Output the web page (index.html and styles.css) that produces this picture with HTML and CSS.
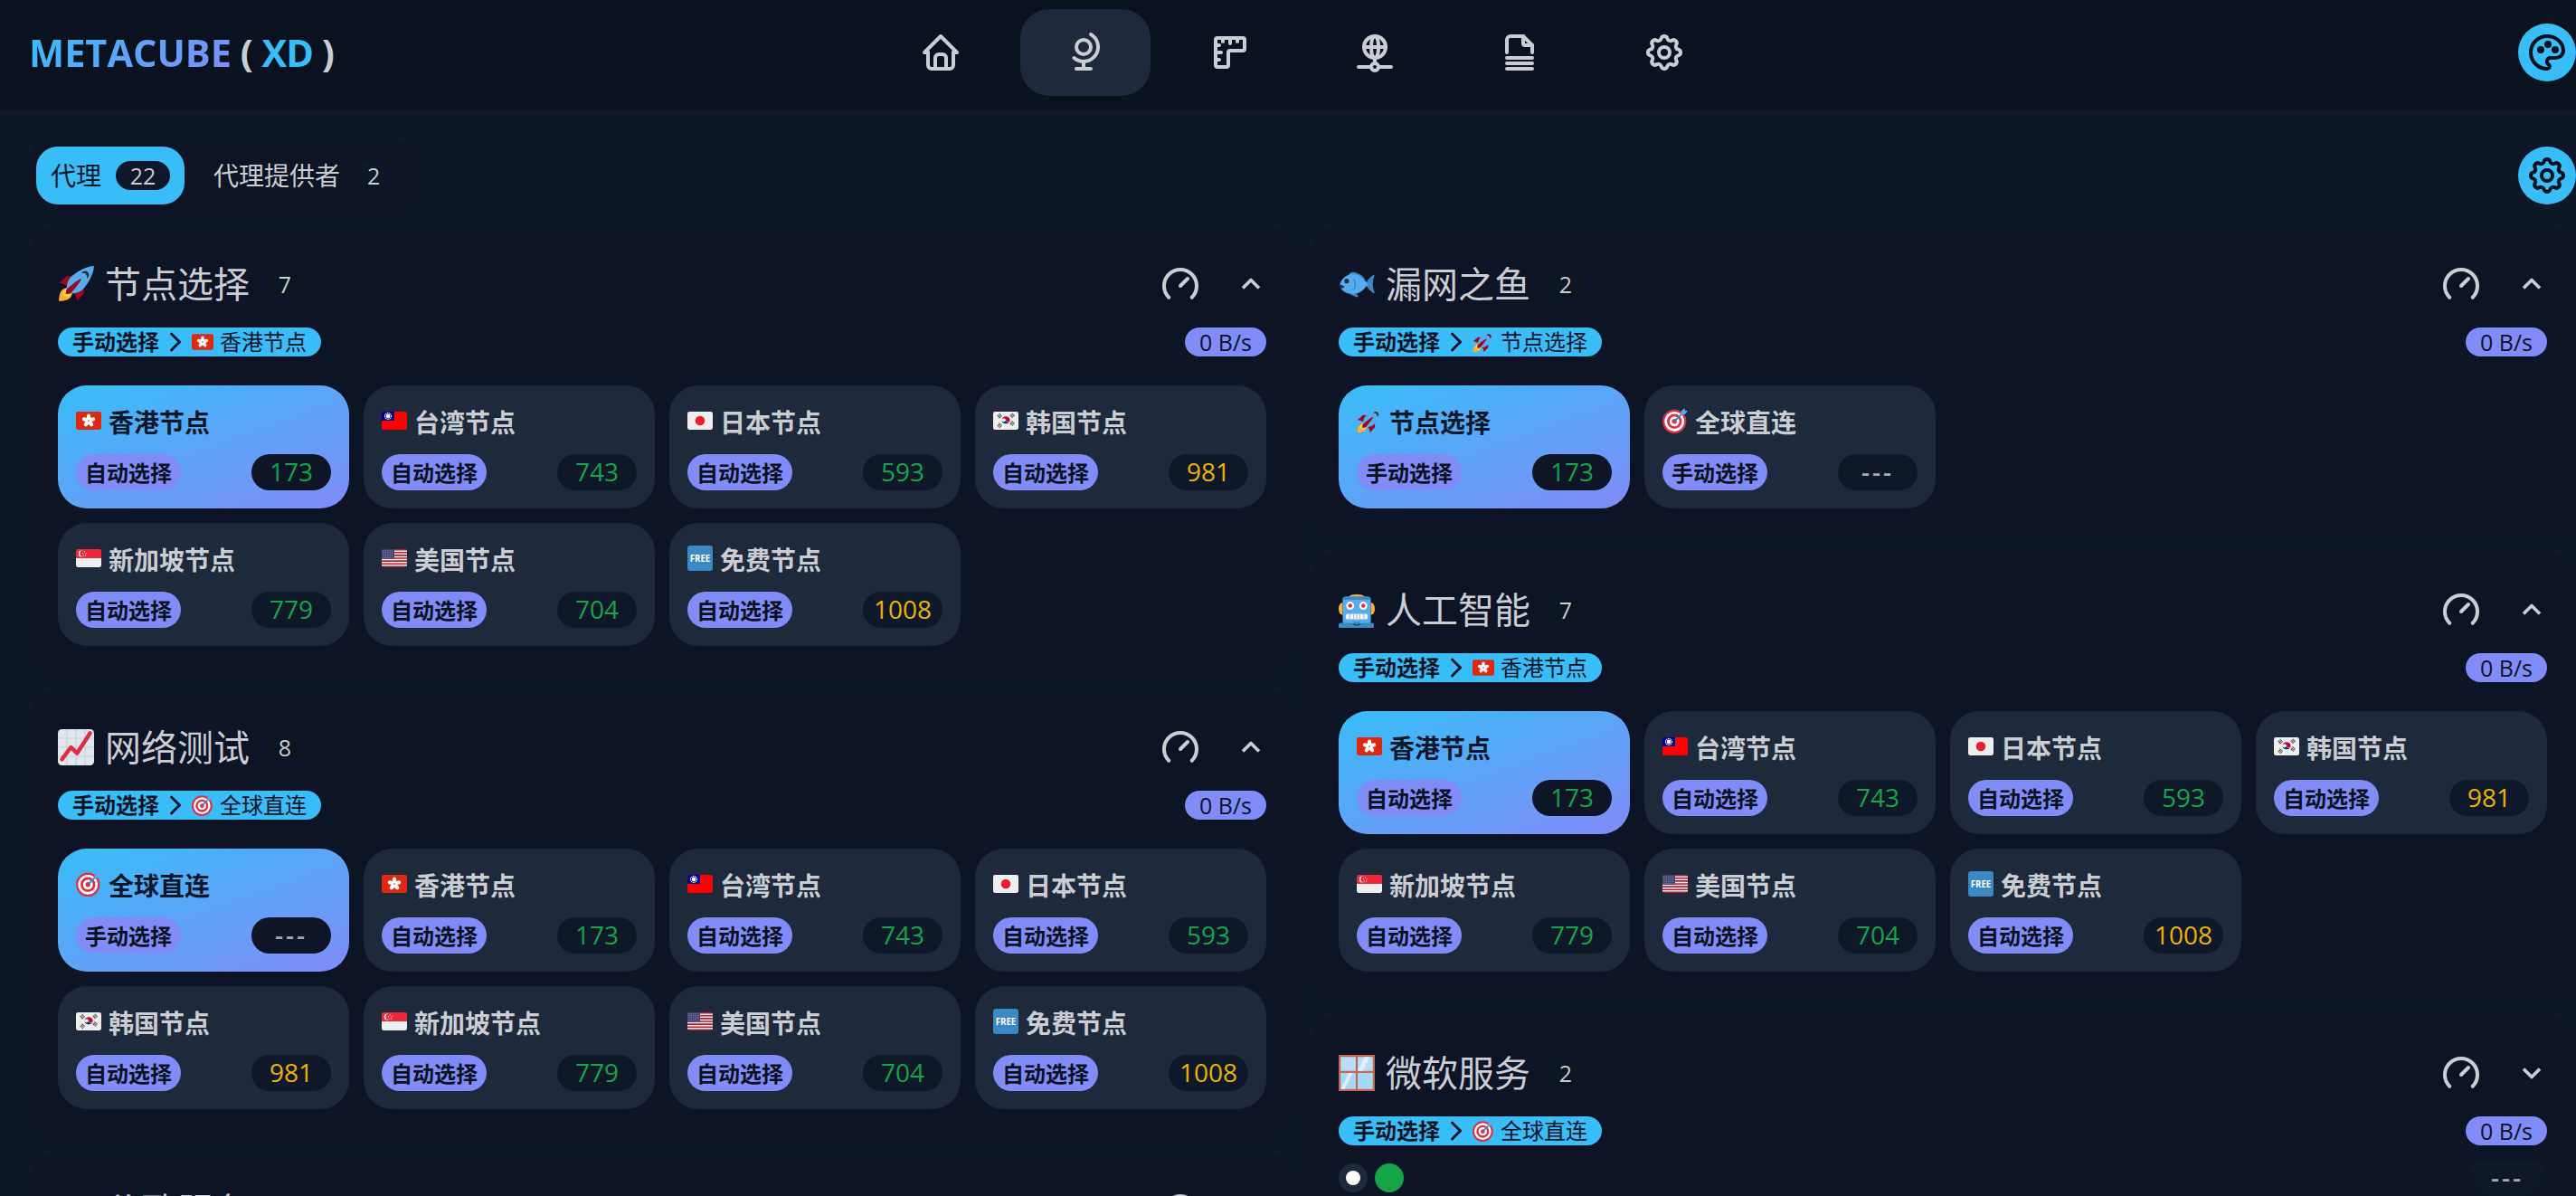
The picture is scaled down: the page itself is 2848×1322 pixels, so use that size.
FILE: index.html
```html
<!DOCTYPE html>
<html lang="zh">
<head>
<meta charset="utf-8">
<title>MetaCubeXD</title>
<link rel="stylesheet" href="styles.css">
</head>
<body>
<svg class="sprites" aria-hidden="true">
  <symbol id="i-home" viewBox="0 0 24 24"><path d="M5 12l-2 0l9 -9l9 9l-2 0"/><path d="M5 12v7a2 2 0 0 0 2 2h10a2 2 0 0 0 2 -2v-7"/><path d="M9 21v-6a2 2 0 0 1 2 -2h2a2 2 0 0 1 2 2v6"/></symbol>
  <symbol id="i-globe" viewBox="0 0 24 24"><path d="M7 9a4 4 0 1 0 8 0a4 4 0 0 0 -8 0"/><path d="M5.75 15a8.015 8.015 0 1 0 9.25 -13"/><path d="M11 17v4"/><path d="M7 21h8"/></symbol>
  <symbol id="i-ruler" viewBox="0 0 24 24"><path d="M5 4h14a1 1 0 0 1 1 1v5a1 1 0 0 1 -1 1h-7a1 1 0 0 0 -1 1v7a1 1 0 0 1 -1 1h-5a1 1 0 0 1 -1 -1v-14a1 1 0 0 1 1 -1"/><path d="M4 8l2 0"/><path d="M4 12l3 0"/><path d="M4 16l2 0"/><path d="M8 4l0 2"/><path d="M12 4l0 3"/><path d="M16 4l0 2"/></symbol>
  <symbol id="i-net" viewBox="0 0 24 24"><path d="M6 9a6 6 0 1 0 12 0a6 6 0 0 0 -12 0"/><path d="M12 3c1.333 .333 2 2.333 2 6s-.667 5.667 -2 6"/><path d="M12 3c-1.333 .333 -2 2.333 -2 6s.667 5.667 2 6"/><path d="M6 9h12"/><path d="M3 20h7"/><path d="M14 20h7"/><path d="M10 20a2 2 0 1 0 4 0a2 2 0 0 0 -4 0"/><path d="M12 15v3"/></symbol>
  <symbol id="i-file" viewBox="0 0 24 24"><path d="M14 3v4a1 1 0 0 0 1 1h4"/><path d="M5 12v-7a2 2 0 0 1 2 -2h7l5 5v4"/><path d="M5 21h14"/><path d="M5 18h14"/><path d="M5 15h14"/></symbol>
  <symbol id="i-gear" viewBox="0 0 24 24"><path d="M10.325 4.317c.426 -1.756 2.924 -1.756 3.35 0a1.724 1.724 0 0 0 2.573 1.066c1.543 -.94 3.31 .826 2.37 2.37a1.724 1.724 0 0 0 1.065 2.572c1.756 .426 1.756 2.924 0 3.35a1.724 1.724 0 0 0 -1.066 2.573c.94 1.543 -.826 3.31 -2.37 2.37a1.724 1.724 0 0 0 -2.572 1.065c-.426 1.756 -2.924 1.756 -3.35 0a1.724 1.724 0 0 0 -2.573 -1.066c-1.543 .94 -3.31 -.826 -2.37 -2.37a1.724 1.724 0 0 0 -1.065 -2.572c-1.756 -.426 -1.756 -2.924 0 -3.35a1.724 1.724 0 0 0 1.066 -2.573c-.94 -1.543 .826 -3.31 2.37 -2.37c1 .608 2.296 .07 2.572 -1.065z"/><path d="M9 12a3 3 0 1 0 6 0a3 3 0 0 0 -6 0"/></symbol>
  <symbol id="i-palette" viewBox="0 0 24 24"><path d="M12 21a9 9 0 0 1 0 -18c4.97 0 9 3.582 9 8c0 1.06 -.474 2.078 -1.318 2.828c-.844 .75 -1.989 1.172 -3.182 1.172h-2.5a2 2 0 0 0 -1 3.75a1.3 1.3 0 0 1 -1 2.25"/><path d="M7.5 10.5a1 1 0 1 0 2 0a1 1 0 1 0 -2 0"/><path d="M11.5 7.5a1 1 0 1 0 2 0a1 1 0 1 0 -2 0"/><path d="M15.5 10.5a1 1 0 1 0 2 0a1 1 0 1 0 -2 0"/></symbol>
  <symbol id="i-gauge" viewBox="0 0 24 24"><path d="M5.636 19.364a9 9 0 1 1 12.728 0"/><path d="M16 9l-4 4"/></symbol>
  <symbol id="i-up" viewBox="0 0 24 24"><path d="M6 15l6 -6l6 6"/></symbol>
  <symbol id="i-down" viewBox="0 0 24 24"><path d="M6 9l6 6l6 -6"/></symbol>
  <symbol id="i-right" viewBox="0 0 24 24"><path d="M9 6l6 6l-6 6"/></symbol>

  <symbol id="e-rocket" viewBox="0 0 36 36"><path fill="#A0041E" d="M1 17l8-7 16 1 1 16-7 8s.001-5.999-6-12-12-6-12-6z"/><path fill="#FFAC33" d="M.973 35s-.036-7.979 2.985-11S15 21.187 15 21.187 14.999 29 11.999 32c-3 3-11.026 3-11.026 3z"/><circle fill="#FFCC4D" cx="9" cy="27" r="4"/><path fill="#55ACEE" d="M36 0s-10 0-22 10c-6 5-6 14-4 16s11 2 16-4c10-12 10-22 10-22z"/><path fill="#292F33" d="M27 5c-1.623 0-3.013.97-3.641 2.36.502-.227 1.055-.36 1.641-.36 2.209 0 4 1.791 4 4 0 .586-.133 1.139-.359 1.64C30.03 12.013 31 10.623 31 9c0-2.209-1.791-4-4-4z"/><path fill="#A0041E" d="M8 28s0-4 1-5 13-11 14-10-9 13-10 14-5 1-5 1z"/></symbol>
  <symbol id="e-target" viewBox="0 0 36 36"><circle fill="#DD2E44" cx="17" cy="19" r="17"/><circle fill="#FFF" cx="17" cy="19" r="14"/><circle fill="#DD2E44" cx="17" cy="19" r="10.500"/><circle fill="#FFF" cx="17" cy="19" r="7"/><circle fill="#DD2E44" cx="17" cy="19" r="3.500"/><path fill="none" stroke="#3B88C3" stroke-width="2.400" d="M17 19L30 6"/><path fill="#55ACEE" d="M26 10l1-6 5-4v4h4l-4 5-6 1z"/></symbol>
  <symbol id="e-chart" viewBox="0 0 36 36"><rect x="0" y="0" width="36" height="36" rx="4" fill="#E1E8ED"/><path stroke="#CCD6DD" stroke-width="1.5" fill="none" d="M9 0v36M18 0v36M27 0v36M0 9h36M0 18h36M0 27h36"/><path stroke="#DD2E44" stroke-width="4" stroke-linecap="round" stroke-linejoin="round" fill="none" d="M4 30l9-12 6 6 13-20"/></symbol>
  <symbol id="e-fish" viewBox="0 0 36 36"><path fill="#3B88C3" d="M34.5 9c-3 2-6 5-8 9 2 4 5 7 8 9 1 .4 1.5-.5 1-1.500-1-2-1.500-5-1.500-7.500s.5-5.500 1.500-7.500c.5-1 0-1.900-1-1.500z"/><path fill="#3B88C3" d="M10 9c1-2 2-3 4-3 5 0 11 4 13 8L10 9zM11 28c2 1 4 2.500 8 3 1 0 0-2-1-3l-7 0z"/><path fill="#55ACEE" d="M1 19c1-6 7-11 13-11 7 0 12 6 15 10-3 5-8 10-15 10-6 0-12-3-13-9z"/><circle fill="#292F33" cx="8" cy="15" r="2.300"/><path fill="#292F33" d="M.7 18.500c2 .2 4 1 5.300 2.500-1.500 1-3 1.500-4 1.500-.8-1-1.200-2.500-1.300-4z"/><path fill="none" stroke="#3B88C3" stroke-width="1.200" d="M15 13c2 3 2 7 0 11"/></symbol>
  <symbol id="e-robot" viewBox="0 0 36 36"><path fill="#FFAC33" d="M10 5c2-3 14-3 16 0v4H10zM4 11H3c-2 1-3 3-3 6s1 5 3 6h1zM32 11h1c2 1 3 3 3 6s-1 5-3 6h-1z"/><rect x="4" y="5" width="28" height="27" rx="3" fill="#55ACEE"/><path fill="#3B88C3" d="M7 5h22c1.500 0 3 1.500 3 3H4c0-1.500 1.500-3 3-3z"/><circle fill="#FFF" cx="11.500" cy="14" r="4"/><circle fill="#FFF" cx="24.500" cy="14" r="4"/><circle fill="#DD2E44" cx="11.500" cy="14" r="2"/><circle fill="#DD2E44" cx="24.500" cy="14" r="2"/><rect x="7" y="22" width="22" height="5.500" rx="2" fill="#F5F8FA"/><path stroke="#99AAB5" stroke-width=".8" d="M11 22v5.500M15 22v5.500M18 22v5.500M21 22v5.500M25 22v5.500"/><path fill="#3B88C3" d="M2 31h9l7 3 7-3h9c1 0 1 1 1 2v2c0 .6-.4 1-1 1H1c-.6 0-1-.4-1-1v-2c0-1 1-2 2-2z"/><path fill="#3B88C3" d="M14 30h8l-4 3.500z"/></symbol>
  <symbol id="e-window" viewBox="0 0 36 36"><rect width="36" height="36" fill="#C1694F"/><rect x="2" y="2" width="15" height="14" fill="#BBDDF5"/><rect x="19" y="2" width="15" height="14" fill="#BBDDF5"/><rect x="2" y="18" width="15" height="16" fill="#A6D8FA"/><rect x="19" y="18" width="15" height="16" fill="#A6D8FA"/><path fill="#DCEFFB" d="M26 2h5l-7 14h-5v-1zM10 18h4l-8 16H2z"/></symbol>

  <symbol id="f-hk" viewBox="0 0 36 36"><rect y="5" width="36" height="26" rx="3" fill="#DE2910"/><g fill="#FFF"><ellipse cx="18" cy="13" rx="2.800" ry="4.600"/><ellipse cx="18" cy="13" rx="2.800" ry="4.600" transform="rotate(72 18 18)"/><ellipse cx="18" cy="13" rx="2.800" ry="4.600" transform="rotate(144 18 18)"/><ellipse cx="18" cy="13" rx="2.800" ry="4.600" transform="rotate(216 18 18)"/><ellipse cx="18" cy="13" rx="2.800" ry="4.600" transform="rotate(288 18 18)"/></g><circle cx="18" cy="18" r="1" fill="#DE2910"/></symbol>
  <symbol id="f-tw" viewBox="0 0 36 36"><rect y="5" width="36" height="26" rx="3" fill="#FE0000"/><path fill="#000095" d="M0 8a3 3 0 0 1 3-3h15v13H0z"/><circle cx="9" cy="11.500" r="3" fill="#FFF"/><circle cx="9" cy="11.500" r="4.500" fill="none" stroke="#FFF" stroke-width="1.500" stroke-dasharray="1.500 .9"/></symbol>
  <symbol id="f-jp" viewBox="0 0 36 36"><rect y="5" width="36" height="26" rx="3" fill="#EEE"/><circle cx="18" cy="18" r="6.800" fill="#ED1B2F"/></symbol>
  <symbol id="f-kr" viewBox="0 0 36 36"><rect y="5" width="36" height="26" rx="3" fill="#EEE"/><path fill="#C60C30" d="M12 16.500a6.200 6.200 0 0 1 12 0c.5 2-1.500 3.500-3 3.500s-3-2-3-3-1.500-2.500-3-2.500-2.500 1-3 2z"/><path fill="#003478" d="M12 17c0 1 1 2.500 3 2.500s3-1 3-2c0 1 1.500 3 3 3s2.500-.8 3-2.500a6.200 6.200 0 0 1-12-1z"/><path stroke="#444" stroke-width="1.300" fill="none" stroke-dasharray="2.500 .6" d="M6 11.500l4-3.500M7.200 13l4-3.500M8.400 14.500l4-3.500M24 21.500l4 3.500M25.200 20l4 3.500M26.400 18.500l4 3.500M6 24.500l4 3.500M7.200 23l4 3.500M8.400 21.500l4 3.500M24 11l4-3.500M25.200 12.500l4-3.500M26.400 14l4-3.500"/></symbol>
  <symbol id="f-sg" viewBox="0 0 36 36"><path fill="#EEE" d="M0 18h36v10a3 3 0 0 1-3 3H3a3 3 0 0 1-3-3z"/><path fill="#ED2939" d="M3 5h30a3 3 0 0 1 3 3v10H0V8a3 3 0 0 1 3-3z"/><circle cx="8" cy="11.500" r="4.500" fill="#FFF"/><circle cx="10" cy="11.500" r="4.300" fill="#ED2939"/><g fill="#FFF"><circle cx="12" cy="8.800" r=".8"/><circle cx="14.500" cy="11" r=".8"/><circle cx="9.800" cy="11" r=".8"/><circle cx="10.500" cy="14" r=".8"/><circle cx="13.500" cy="14" r=".8"/></g></symbol>
  <symbol id="f-us" viewBox="0 0 36 36"><rect y="5" width="36" height="26" rx="3" fill="#B22334"/><path fill="#EEE" d="M0 7h36v2H0zM0 11h36v2H0zM0 15h36v2H0zM0 19h36v2H0zM0 23h36v2H0zM0 27h36v2H0z"/><path fill="#3C3B6E" d="M0 8a3 3 0 0 1 3-3h15v14H0z"/><path stroke="#B9BAD6" stroke-width="1" stroke-dasharray="1 1.200" fill="none" d="M1 7.500h16M1 10h16M1 12.500h16M1 15h16M1 17.500h16"/></symbol>
</svg>

<div class="app">
  <header class="top">
    <div class="logo"><span class="logo-grad">METACUBE</span><span class="logo-par"> ( </span><span class="logo-xd">XD</span><span class="logo-par"> )</span></div>
    <nav class="nav">
      <a class="nav-btn"><svg class="ic ic-48"><use href="#i-home"/></svg></a>
      <a class="nav-btn nav-on"><svg class="ic ic-48"><use href="#i-globe"/></svg></a>
      <a class="nav-btn"><svg class="ic ic-48"><use href="#i-ruler"/></svg></a>
      <a class="nav-btn"><svg class="ic ic-48"><use href="#i-net"/></svg></a>
      <a class="nav-btn"><svg class="ic ic-48"><use href="#i-file"/></svg></a>
      <a class="nav-btn"><svg class="ic ic-48"><use href="#i-gear"/></svg></a>
    </nav>
    <div class="top-end"><button class="round"><svg class="ic ic-48"><use href="#i-palette"/></svg></button></div>
  </header>

  <main class="main">
    <div class="toolbar">
      <div class="tabs">
        <div class="tab tab-on"><span>代理</span><span class="tab-count">22</span></div>
        <div class="tab"><span>代理提供者</span><span class="tab-count">2</span></div>
      </div>
      <button class="round"><svg class="ic ic-48"><use href="#i-gear"/></svg></button>
    </div>

    <div class="columns">
      <div class="column">
        <section class="card">
          <div class="card-head"><svg class="em em-40"><use href="#e-rocket"/></svg><h2 class="card-title">节点选择</h2><span class="count">7</span><span class="head-tools"><span class="gauge"><svg class="ic ic-48"><use href="#i-gauge"/></svg></span><svg class="ic ic-36 chev-v"><use href="#i-up"/></svg></span></div>
          <div class="card-meta"><span class="now"><b>手动选择</b><svg class="ic ic-36 chev"><use href="#i-right"/></svg><svg class="em em-24"><use href="#f-hk"/></svg><span>香港节点</span></span><span class="speed">0 B/s</span></div>
          <div class="nodes">
            <div class="node node-on"><div class="node-name"><svg class="em em-28"><use href="#f-hk"/></svg><span>香港节点</span></div><div class="node-foot"><span class="pill">自动选择</span><span class="lat good">173</span></div></div>
            <div class="node"><div class="node-name"><svg class="em em-28"><use href="#f-tw"/></svg><span>台湾节点</span></div><div class="node-foot"><span class="pill">自动选择</span><span class="lat good">743</span></div></div>
            <div class="node"><div class="node-name"><svg class="em em-28"><use href="#f-jp"/></svg><span>日本节点</span></div><div class="node-foot"><span class="pill">自动选择</span><span class="lat good">593</span></div></div>
            <div class="node"><div class="node-name"><svg class="em em-28"><use href="#f-kr"/></svg><span>韩国节点</span></div><div class="node-foot"><span class="pill">自动选择</span><span class="lat warn">981</span></div></div>
            <div class="node"><div class="node-name"><svg class="em em-28"><use href="#f-sg"/></svg><span>新加坡节点</span></div><div class="node-foot"><span class="pill">自动选择</span><span class="lat good">779</span></div></div>
            <div class="node"><div class="node-name"><svg class="em em-28"><use href="#f-us"/></svg><span>美国节点</span></div><div class="node-foot"><span class="pill">自动选择</span><span class="lat good">704</span></div></div>
            <div class="node"><div class="node-name"><svg class="em em-28" viewBox="0 0 36 36"><rect width="36" height="36" rx="4" fill="#3B88C3"/><text class="free-text" x="18" y="23.500" text-anchor="middle">FREE</text></svg><span>免费节点</span></div><div class="node-foot"><span class="pill">自动选择</span><span class="lat warn">1008</span></div></div>
          </div>
        </section>

        <section class="card">
          <div class="card-head"><svg class="em em-40"><use href="#e-chart"/></svg><h2 class="card-title">网络测试</h2><span class="count">8</span><span class="head-tools"><span class="gauge"><svg class="ic ic-48"><use href="#i-gauge"/></svg></span><svg class="ic ic-36 chev-v"><use href="#i-up"/></svg></span></div>
          <div class="card-meta"><span class="now"><b>手动选择</b><svg class="ic ic-36 chev"><use href="#i-right"/></svg><svg class="em em-24"><use href="#e-target"/></svg><span>全球直连</span></span><span class="speed">0 B/s</span></div>
          <div class="nodes">
            <div class="node node-on"><div class="node-name"><svg class="em em-28"><use href="#e-target"/></svg><span>全球直连</span></div><div class="node-foot"><span class="pill">手动选择</span><span class="lat none">---</span></div></div>
            <div class="node"><div class="node-name"><svg class="em em-28"><use href="#f-hk"/></svg><span>香港节点</span></div><div class="node-foot"><span class="pill">自动选择</span><span class="lat good">173</span></div></div>
            <div class="node"><div class="node-name"><svg class="em em-28"><use href="#f-tw"/></svg><span>台湾节点</span></div><div class="node-foot"><span class="pill">自动选择</span><span class="lat good">743</span></div></div>
            <div class="node"><div class="node-name"><svg class="em em-28"><use href="#f-jp"/></svg><span>日本节点</span></div><div class="node-foot"><span class="pill">自动选择</span><span class="lat good">593</span></div></div>
            <div class="node"><div class="node-name"><svg class="em em-28"><use href="#f-kr"/></svg><span>韩国节点</span></div><div class="node-foot"><span class="pill">自动选择</span><span class="lat warn">981</span></div></div>
            <div class="node"><div class="node-name"><svg class="em em-28"><use href="#f-sg"/></svg><span>新加坡节点</span></div><div class="node-foot"><span class="pill">自动选择</span><span class="lat good">779</span></div></div>
            <div class="node"><div class="node-name"><svg class="em em-28"><use href="#f-us"/></svg><span>美国节点</span></div><div class="node-foot"><span class="pill">自动选择</span><span class="lat good">704</span></div></div>
            <div class="node"><div class="node-name"><svg class="em em-28" viewBox="0 0 36 36"><rect width="36" height="36" rx="4" fill="#3B88C3"/><text class="free-text" x="18" y="23.500" text-anchor="middle">FREE</text></svg><span>免费节点</span></div><div class="node-foot"><span class="pill">自动选择</span><span class="lat warn">1008</span></div></div>
          </div>
        </section>

        <section class="card">
          <div class="card-head"><span class="em-gap"></span><h2 class="card-title">谷歌服务</h2><span class="count">2</span><span class="head-tools"><span class="gauge"><svg class="ic ic-48"><use href="#i-gauge"/></svg></span><svg class="ic ic-36 chev-v"><use href="#i-down"/></svg></span></div>
        </section>
      </div>

      <div class="column">
        <section class="card">
          <div class="card-head"><svg class="em em-40"><use href="#e-fish"/></svg><h2 class="card-title">漏网之鱼</h2><span class="count">2</span><span class="head-tools"><span class="gauge"><svg class="ic ic-48"><use href="#i-gauge"/></svg></span><svg class="ic ic-36 chev-v"><use href="#i-up"/></svg></span></div>
          <div class="card-meta"><span class="now"><b>手动选择</b><svg class="ic ic-36 chev"><use href="#i-right"/></svg><svg class="em em-24"><use href="#e-rocket"/></svg><span>节点选择</span></span><span class="speed">0 B/s</span></div>
          <div class="nodes">
            <div class="node node-on"><div class="node-name"><svg class="em em-28"><use href="#e-rocket"/></svg><span>节点选择</span></div><div class="node-foot"><span class="pill">手动选择</span><span class="lat good">173</span></div></div>
            <div class="node"><div class="node-name"><svg class="em em-28"><use href="#e-target"/></svg><span>全球直连</span></div><div class="node-foot"><span class="pill">手动选择</span><span class="lat none">---</span></div></div>
          </div>
        </section>

        <section class="card">
          <div class="card-head"><svg class="em em-40"><use href="#e-robot"/></svg><h2 class="card-title">人工智能</h2><span class="count">7</span><span class="head-tools"><span class="gauge"><svg class="ic ic-48"><use href="#i-gauge"/></svg></span><svg class="ic ic-36 chev-v"><use href="#i-up"/></svg></span></div>
          <div class="card-meta"><span class="now"><b>手动选择</b><svg class="ic ic-36 chev"><use href="#i-right"/></svg><svg class="em em-24"><use href="#f-hk"/></svg><span>香港节点</span></span><span class="speed">0 B/s</span></div>
          <div class="nodes">
            <div class="node node-on"><div class="node-name"><svg class="em em-28"><use href="#f-hk"/></svg><span>香港节点</span></div><div class="node-foot"><span class="pill">自动选择</span><span class="lat good">173</span></div></div>
            <div class="node"><div class="node-name"><svg class="em em-28"><use href="#f-tw"/></svg><span>台湾节点</span></div><div class="node-foot"><span class="pill">自动选择</span><span class="lat good">743</span></div></div>
            <div class="node"><div class="node-name"><svg class="em em-28"><use href="#f-jp"/></svg><span>日本节点</span></div><div class="node-foot"><span class="pill">自动选择</span><span class="lat good">593</span></div></div>
            <div class="node"><div class="node-name"><svg class="em em-28"><use href="#f-kr"/></svg><span>韩国节点</span></div><div class="node-foot"><span class="pill">自动选择</span><span class="lat warn">981</span></div></div>
            <div class="node"><div class="node-name"><svg class="em em-28"><use href="#f-sg"/></svg><span>新加坡节点</span></div><div class="node-foot"><span class="pill">自动选择</span><span class="lat good">779</span></div></div>
            <div class="node"><div class="node-name"><svg class="em em-28"><use href="#f-us"/></svg><span>美国节点</span></div><div class="node-foot"><span class="pill">自动选择</span><span class="lat good">704</span></div></div>
            <div class="node"><div class="node-name"><svg class="em em-28" viewBox="0 0 36 36"><rect width="36" height="36" rx="4" fill="#3B88C3"/><text class="free-text" x="18" y="23.500" text-anchor="middle">FREE</text></svg><span>免费节点</span></div><div class="node-foot"><span class="pill">自动选择</span><span class="lat warn">1008</span></div></div>
          </div>
        </section>

        <section class="card">
          <div class="card-head"><svg class="em em-40"><use href="#e-window"/></svg><h2 class="card-title">微软服务</h2><span class="count">2</span><span class="head-tools"><span class="gauge"><svg class="ic ic-48"><use href="#i-gauge"/></svg></span><svg class="ic ic-36 chev-v"><use href="#i-down"/></svg></span></div>
          <div class="card-meta"><span class="now"><b>手动选择</b><svg class="ic ic-36 chev"><use href="#i-right"/></svg><svg class="em em-24"><use href="#e-target"/></svg><span>全球直连</span></span><span class="speed">0 B/s</span></div>
          <div class="dots-row"><span class="dot dot-sel"></span><span class="dot dot-good"></span><span class="lat none dots-lat">---</span></div>
        </section>
      </div>
    </div>
  </main>
</div>
</body>
</html>
```

FILE: styles.css
```css
* { box-sizing: border-box; }
html, body { margin: 0; height: 100%; overflow: hidden; background: #0e1727; }
body {
  font-family: "Open Sans", "Noto Sans CJK SC", sans-serif;
  color: #cacdd2;
}
.sprites { position: absolute; width: 0; height: 0; overflow: hidden; }
.free-text { font-family: "Open Sans", sans-serif; font-size: 12.5px; font-weight: 700; fill: #fff; }

.app { width: 2880px; height: 1322px; overflow: hidden; }

.ic { fill: none; stroke: currentColor; stroke-width: 2; stroke-linecap: round; stroke-linejoin: round; flex: none; display: block; }
.ic-48 { width: 48px; height: 48px; }
.ic-36 { width: 36px; height: 36px; }
.chev-v { stroke-width: 2.4; stroke-linecap: butt; }
.em { flex: none; display: block; }
.em-40 { width: 40px; height: 40px; }
.em-28 { width: 28px; height: 28px; }
.em-24 { width: 24px; height: 24px; }
.em-gap { width: 40px; flex: none; }

/* header */
.top {
  height: 122px;
  padding: 0 32px 6px;
  display: grid;
  grid-template-columns: 1fr auto 1fr;
  align-items: center;
  background: #0a111f;
}
.logo { font-size: 41.5px; font-weight: 700; line-height: 60px; white-space: pre; word-spacing: -1px; }
.logo-grad {
  background: linear-gradient(135deg, #38bdf8, #818cf8);
  -webkit-background-clip: text;
  background-clip: text;
  color: transparent;
}
.logo-xd { color: #38bdf8; letter-spacing: -1px; }
.logo-par { color: #cacdd2; }
.nav { display: flex; gap: 16px; }
.nav-btn {
  width: 144px; height: 96px; border-radius: 32px;
  display: flex; align-items: center; justify-content: center;
}
.nav-on { background: #1e293b; }
.top-end { display: flex; justify-content: flex-end; }
.round {
  width: 64px; height: 64px; border-radius: 50%; border: 0; padding: 0;
  background: #38bdf8; color: #0a111f;
  display: flex; align-items: center; justify-content: center;
}

/* main */
.main { padding: 32px 32px 0; }
.toolbar { display: flex; justify-content: space-between; align-items: center; height: 80px; margin-bottom: 16px; }
.tabs { display: flex; gap: 16px; padding: 8px; background: #0d1524; border-radius: 24px; height: 80px; }
.tab {
  height: 64px; padding: 0 16px; border-radius: 24px;
  display: flex; align-items: center; gap: 16px;
  font-size: 28px; line-height: 40px;
}
.tab-on { background: #38bdf8; color: #0f172a; }
.tab-count {
  min-width: 42px; height: 32px; padding: 0 12px 1px; border-radius: 16px;
  display: flex; align-items: center; justify-content: center;
  font-size: 25px; background: #0d1727; color: #cacdd2;
}
.tab-on .tab-count { width: 60px; background: #0f172a; }

.columns { display: grid; grid-template-columns: 1400px 1400px; gap: 16px; align-items: start; }
.column { display: flex; flex-direction: column; gap: 16px; }
.card { background: #0d1425; border-radius: 32px; padding: 32px; }
.card-head { display: flex; align-items: center; height: 64px; }
.card-title { margin: 0 0 0 12px; font-size: 40px; line-height: 56px; font-weight: 400; color: #cacdd2; }
.count {
  margin-left: 18px; width: 42px; height: 30px; border-radius: 15px;
  display: flex; align-items: center; justify-content: center;
  font-size: 25px; background: #0c1621; color: #cacdd2;
}
.head-tools { margin-left: auto; display: flex; align-items: center; gap: 27px; margin-right: -1px; }
.gauge { width: 66px; height: 66px; border-radius: 50%; background: #0c1322; display: flex; align-items: center; justify-content: center; }
.card-meta { display: flex; justify-content: space-between; align-items: center; height: 32px; margin-top: 16px; }
.now {
  height: 32px; padding: 0 16px; border-radius: 16px;
  background: #38bdf8; color: #0d1425;
  display: flex; align-items: center; gap: 0;
  font-size: 24px; line-height: 32px;
}
.now b { font-weight: 700; }
.now .em { margin-right: 7px; }
.speed {
  width: 90px; height: 32px; border-radius: 16px;
  background: #818cf8; color: #0d1425;
  display: flex; align-items: center; justify-content: center;
  font-size: 25px; line-height: 32px; white-space: nowrap;
}

.nodes { display: grid; grid-template-columns: repeat(4, 1fr); gap: 16px; margin-top: 32px; }
.node {
  height: 136px; padding: 20px; border-radius: 32px; background: #1e293b;
  display: flex; flex-direction: column; justify-content: space-between;
}
.node-on { background: linear-gradient(160deg, #38bdf8, #818cf8); color: #0f172a; }
.node-name { display: flex; align-items: center; gap: 8px; height: 38px; font-size: 28px; font-weight: 700; line-height: 38px; }
.node-name span { padding-top: 3px; }
.node-foot { display: flex; justify-content: space-between; align-items: center; }
.pill {
  height: 40px; width: 116px; padding-bottom: 2px; border-radius: 20px; background: #818cf8; color: #0a111f;
  display: flex; align-items: center; justify-content: center;
  font-size: 24px; font-weight: 700;
}
.lat {
  width: 88px; height: 40px; padding-bottom: 2px; border-radius: 20px; background: #0f1829;
  display: flex; align-items: center; justify-content: center;
  font-size: 28px;
}
.node-on .lat { background: #0d1526; }
.good { color: #16a34a; }
.warn { color: #eab308; }
.none { color: #a4a9b0; letter-spacing: 3px; font-weight: 600; }

.dots-row { display: flex; align-items: center; gap: 8px; height: 40px; margin-top: 16px; }
.dot { width: 32px; height: 32px; border-radius: 50%; display: block; }
.dot-sel { background: #1e293b; position: relative; }
.dot-sel::after { content: ""; position: absolute; inset: 8px; border-radius: 50%; background: #fff; }
.dot-good { background: #16a34a; }
.dots-lat { margin-left: auto; }
```
